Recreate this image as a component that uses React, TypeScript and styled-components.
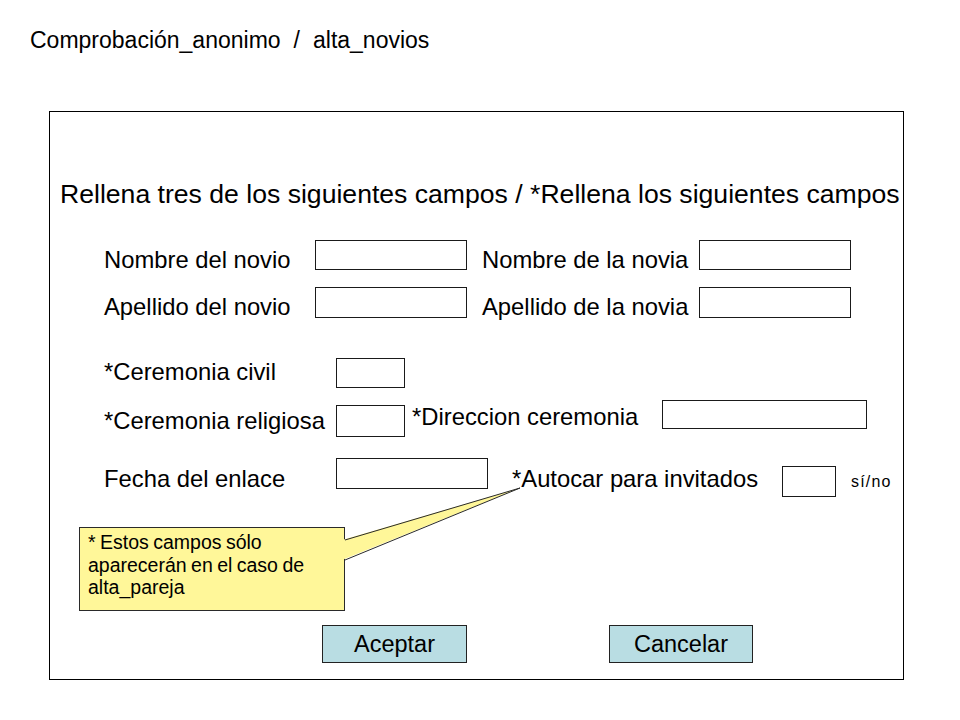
import React from 'react';
import styled, { createGlobalStyle } from 'styled-components';

const GlobalStyle = createGlobalStyle`
  html, body {
    margin: 0;
    padding: 0;
    background: #ffffff;
  }
  body {
    font-family: "Liberation Sans", Arial, sans-serif;
    color: #000000;
  }
  * {
    box-sizing: border-box;
  }
`;

const Page = styled.div`
  width: 960px;
  height: 720px;
  overflow: hidden;
  background: #ffffff;
`;

const Breadcrumb = styled.div`
  margin: 27px 0 0 30px;
  font-size: 23px;
  line-height: 26px;
  white-space: nowrap;
`;

const Sep = styled.span`
  margin: 0 13px;
`;

const Frame = styled.div`
  position: relative;
  margin: 58px 0 0 49px;
  width: 855px;
  height: 569px;
  border: 1px solid #000000;
  display: flex;
  flex-direction: column;
`;

const Title = styled.h1`
  margin: 67px 0 0 10px;
  font-size: 26.6px;
  font-weight: normal;
  line-height: 30px;
  white-space: nowrap;
`;

const Row = styled.div<{ $h: number; $top?: number }>`
  display: flex;
  align-items: flex-start;
  height: ${(p) => p.$h}px;
  margin-top: ${(p) => p.$top ?? 0}px;
  padding-left: 54px;
`;

const Label = styled.span<{ $w: number; $dy?: number; $ml?: number }>`
  flex: none;
  width: ${(p) => p.$w}px;
  margin-top: ${(p) => p.$dy ?? 0}px;
  margin-left: ${(p) => p.$ml ?? 0}px;
  font-size: 23.8px;
  line-height: 28px;
  white-space: nowrap;
`;

const Field = styled.div<{ $w: number; $h: number; $dy?: number }>`
  flex: none;
  width: ${(p) => p.$w}px;
  height: ${(p) => p.$h}px;
  margin-top: ${(p) => p.$dy ?? 0}px;
  border: 1px solid #1a1a1a;
  background: #ffffff;
`;

const Hint = styled.span<{ $ml: number; $dy: number }>`
  margin-left: ${(p) => p.$ml}px;
  margin-top: ${(p) => p.$dy}px;
  font-size: 16px;
  line-height: 20px;
  letter-spacing: 1.2px;
`;

const Actions = styled.div`
  display: flex;
  margin-top: 127px;
`;

const ActionButton = styled.button<{ $ml: number; $w: number }>`
  margin-left: ${(p) => p.$ml}px;
  width: ${(p) => p.$w}px;
  height: 38px;
  padding: 0;
  border: 1px solid #222222;
  background: #b9dde3;
  font-family: "Liberation Sans", Arial, sans-serif;
  font-size: 23.5px;
  color: #000000;
  cursor: pointer;
`;

const Callout = styled.div`
  position: absolute;
  left: 29px;
  top: 415px;
  width: 266px;
  height: 84px;
  padding: 3px 0 0 8px;
  background: #fff799;
  border: 1px solid #2a2a2a;
  font-size: 19.5px;
  line-height: 22.5px;
  word-spacing: -1px;
`;

const CalloutTail = styled.svg`
  position: absolute;
  left: 290px;
  top: 373px;
  overflow: visible;
`;

const App = () => {
  return (
    <Page>
      <GlobalStyle />
      <Breadcrumb>
        Comprobación_anonimo<Sep>/</Sep>alta_novios
      </Breadcrumb>
      <Frame>
        <Title>Rellena tres de los siguientes campos / *Rellena los siguientes campos</Title>

        <Row $h={47} $top={31}>
          <Label $w={211} $dy={6}>Nombre del novio</Label>
          <Field $w={152} $h={30} />
          <Label $w={217} $dy={6} $ml={15}>Nombre de la novia</Label>
          <Field $w={152} $h={30} />
        </Row>

        <Row $h={71}>
          <Label $w={211} $dy={6}>Apellido del novio</Label>
          <Field $w={152} $h={31} />
          <Label $w={217} $dy={6} $ml={15}>Apellido de la novia</Label>
          <Field $w={152} $h={31} />
        </Row>

        <Row $h={42}>
          <Label $w={232} $dy={0}>*Ceremonia civil</Label>
          <Field $w={69} $h={30} />
        </Row>

        <Row $h={58}>
          <Label $w={232} $dy={7}>*Ceremonia religiosa</Label>
          <Field $w={69} $h={32} $dy={5} />
          <Label $w={250} $dy={3} $ml={7}>*Direccion ceremonia</Label>
          <Field $w={205} $h={29} />
        </Row>

        <Row $h={40}>
          <Label $w={232} $dy={7}>Fecha del enlace</Label>
          <Field $w={152} $h={31} />
          <Label $w={270} $dy={7} $ml={24}>*Autocar para invitados</Label>
          <Field $w={54} $h={31} $dy={8} />
          <Hint $ml={15} $dy={14}>sí/no</Hint>
        </Row>

        <Actions>
          <ActionButton $ml={272} $w={145}>Aceptar</ActionButton>
          <ActionButton $ml={142} $w={144}>Cancelar</ActionButton>
        </Actions>

        <Callout>
          * Estos campos sólo
          <br />
          aparecerán en el caso de
          <br />
          alta_pareja
        </Callout>
        <CalloutTail width="190" height="80" viewBox="0 0 190 80">
          <polygon points="2,55 180,3 2,75" fill="#fff799" />
          <polyline points="5,55 180,3 5,75" fill="none" stroke="#2a2a2a" strokeWidth="1" />
        </CalloutTail>
      </Frame>
    </Page>
  );
};

export default App;
